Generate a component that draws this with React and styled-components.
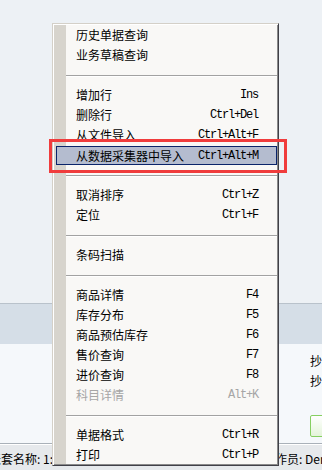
import React from "react";
import styled, { createGlobalStyle, css } from "styled-components";

const Global = createGlobalStyle`
  html, body { margin: 0; padding: 0; }
  body {
    width: 322px; height: 470px; overflow: hidden;
    background: #edf1f5;
    font-family: "Noto Sans CJK SC", "Noto Sans", sans-serif;
  }
`;

/* ─── Window behind the menu ─────────────────────────────────── */
const Page = styled.div`
  position: relative;
  width: 322px; height: 470px; overflow: hidden;
  display: flex; flex-direction: column;
`;

const TopArea = styled.div`
  flex: 0 0 303px; background: #edf1f5;
`;

const Band = styled.div`
  flex: 0 0 40px;
  background: #d5dee7;
  border-top: 1px solid #b9c2cb;
`;

const Content = styled.div`
  flex: 1;
  background: #f5f8fb;
  display: flex; justify-content: flex-end;
  padding-top: 7px;
`;

const RightCol = styled.div`
  width: 12px;
  display: flex; flex-direction: column;
  font-size: 12px; line-height: 20px; color: #000;
  white-space: nowrap;
`;

const GreenBtn = styled.div`
  margin-top: 24px;
  width: 40px; height: 20px;
  border: 1px solid #86cf62;
  border-radius: 2px;
  background: linear-gradient(#ffffff, #e4f4da);
`;

const StatusBar = styled.div`
  flex: 0 0 25px; box-sizing: border-box;
  padding-top: 4px;
  border-top: 1px solid #a9b1b9;
  box-shadow: inset 0 1px #ffffff;
  background: #e6e9ec;
  display: grid; grid-template-columns: 263px 1fr;
  font-size: 12px; line-height: 22px; color: #000;
  white-space: nowrap;
`;

const StatusCell = styled.div`
  overflow: hidden;
  text-indent: ${({ $indent }) => $indent || 0}px;
`;

/* ─── Popup menu ──────────────────────────────────────────────── */
const Menu = styled.div`
  position: absolute; left: 52px; top: 23px; z-index: 2;
  width: 227px; box-sizing: border-box;
  padding-top: 1px;
  border: 1px solid;
  border-color: #d4d0c8 #404048 #404048 #d4d0c8;
  box-shadow: inset 1px 1px #ffffff, inset -1px -1px #8a8a8a;
  background: linear-gradient(to right, transparent 1px, #d7d4cd 1px, #d7d4cd 13px, #f9f8f6 13px);
`;

const Item = styled.div`
  height: 20px; box-sizing: border-box;
  margin: 0 1px 0 1px;
  padding: 0 19px 0 22px;
  display: flex; align-items: center; justify-content: space-between;
  color: ${({ $disabled }) => ($disabled ? "#a6a6a6" : "#000")};
  ${({ $active }) => $active && css`
    height: 19px; margin: 1px 1px 0 3px;
    padding-left: 19px; padding-right: 18px;
    background: #b4bccf;
    border: 1px solid #0a246a;
  `}
`;

const Label = styled.span`
  font-size: 12px; line-height: 20px;
  font-family: "Noto Sans CJK SC", "Noto Sans", sans-serif;
`;

const Shortcut = styled.span`
  font-family: "Liberation Mono", "DejaVu Sans Mono", monospace;
  font-size: 12px; letter-spacing: -1.2px;
`;

const Separator = styled.div`
  height: 20px; margin: 0 1px 0 13px;
  display: flex; align-items: center;
  &::after {
    content: ""; flex: 1; height: 1px;
    background: #a2a2a2; box-shadow: 0 1px #ffffff;
  }
`;

const Callout = styled.div`
  position: absolute; left: 49px; top: 139px; z-index: 3;
  width: 238px; height: 34px; box-sizing: border-box;
  border: 3px solid #f03c3c;
`;

const GROUPS = [
  [["历史单据查询"], ["业务草稿查询"]],
  [["增加行", "Ins"], ["删除行", "Ctrl+Del"], ["从文件导入", "Ctrl+Alt+F"], ["从数据采集器中导入", "Ctrl+Alt+M", "active"]],
  [["取消排序", "Ctrl+Z"], ["定位", "Ctrl+F"]],
  [["条码扫描"]],
  [["商品详情", "F4"], ["库存分布", "F5"], ["商品预估库存", "F6"], ["售价查询", "F7"], ["进价查询", "F8"], ["科目详情", "Alt+K", "disabled"]],
  [["单据格式", "Ctrl+R"], ["打印", "Ctrl+P"]],
];

export default function App() {
  return (
    <>
      <Global />
      <Page>
        <TopArea />
        <Band />
        <Content>
          <RightCol>
            <span>抄送人</span>
            <span>抄送部门</span>
            <GreenBtn />
          </RightCol>
        </Content>
        <StatusBar>
          <StatusCell $indent={-11}>账套名称: 1:</StatusCell>
          <StatusCell>操作员: Demo</StatusCell>
        </StatusBar>

        <Menu>
          {GROUPS.map((g, gi) => (
            <React.Fragment key={gi}>
              {gi > 0 && <Separator />}
              {g.map(([label, key, state]) => (
                <Item key={label} $active={state === "active"} $disabled={state === "disabled"}>
                  <Label>{label}</Label>
                  {key && <Shortcut>{key}</Shortcut>}
                </Item>
              ))}
            </React.Fragment>
          ))}
        </Menu>
        <Callout />
      </Page>
    </>
  );
}
